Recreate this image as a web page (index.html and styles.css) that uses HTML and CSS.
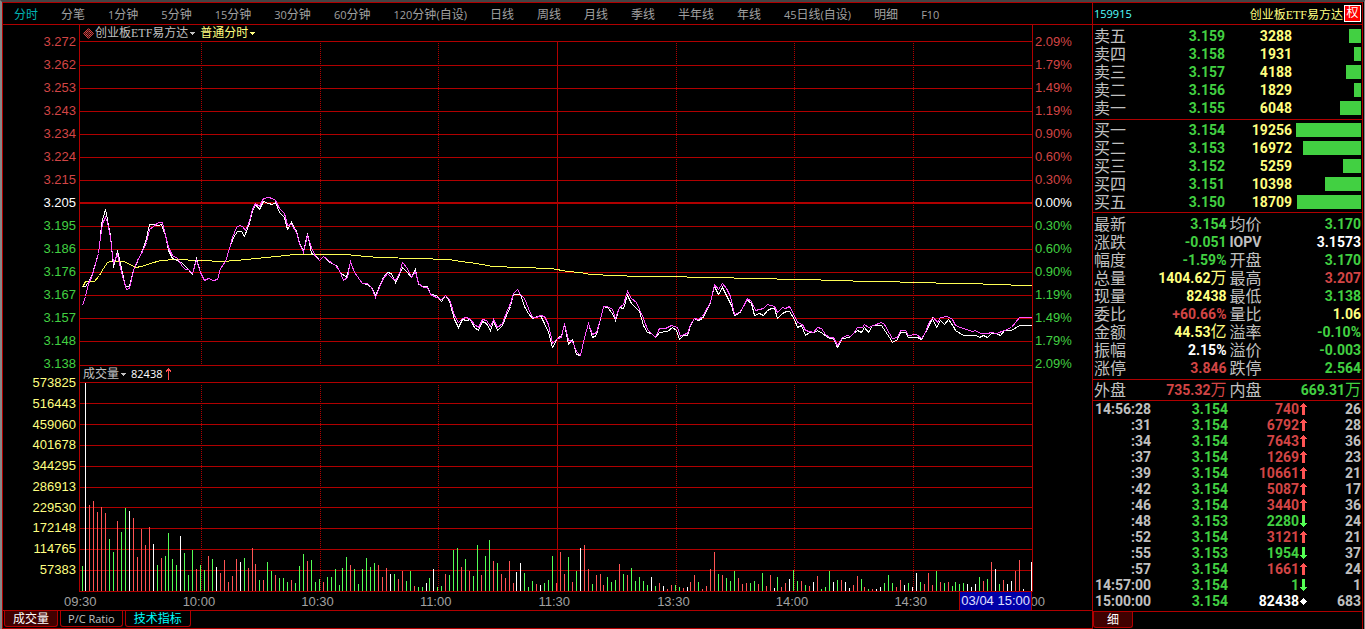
FILE: index.html
```html
<!DOCTYPE html>
<html lang="zh-CN">
<head>
    <meta charset="UTF-8">
    <meta name="viewport" content="width=device-width, initial-scale=1.0">
    <title>创业板ETF易方达 159915</title>
    <link rel="stylesheet" href="styles.css">
</head>
<body>
    <!-- shared symbols -->
    <svg class="defs" width="0" height="0">
        <symbol id="up" viewBox="0 0 7 12"><path d="M3 0h1v1h1v1h1v1h1v1H5v8H2V4H0V3h1V2h1V1h1z"/></symbol>
        <symbol id="down" viewBox="0 0 7 12"><path d="M2 0h3v8h2v1H6v1H5v1H4v1H3v-1H2v-1H1V9H0V8h2z"/></symbol>
        <symbol id="same" viewBox="0 0 7 12"><path d="M3 3h1v1h1v1h1v1h1v1H6v1H5v1H4v1H3V9H2V8H1V7H0V6h1V5h1V4h1z"/></symbol>
        <symbol id="caret" viewBox="0 0 5 3"><path d="M0 0h5v1H4v1H3v1H2V2H1V1H0z"/></symbol>
    </svg>

    <div class="frame">
        <main class="chart">
            <nav class="periods">
                <a href="#" class="active">分时</a>
                <a href="#">分笔</a>
                <a href="#"><span class="num">1</span>分钟</a>
                <a href="#"><span class="num">5</span>分钟</a>
                <a href="#"><span class="num">15</span>分钟</a>
                <a href="#"><span class="num">30</span>分钟</a>
                <a href="#"><span class="num">60</span>分钟</a>
                <a href="#"><span class="num">120</span>分钟<span class="num">(</span>自设<span class="num">)</span></a>
                <a href="#">日线</a>
                <a href="#">周线</a>
                <a href="#">月线</a>
                <a href="#">季线</a>
                <a href="#">半年线</a>
                <a href="#">年线</a>
                <a href="#"><span class="num">45</span>日线<span class="num">(</span>自设<span class="num">)</span></a>
                <a href="#">明细</a>
                <a href="#"><span class="num">F10</span></a>
            </nav>

            <div class="charts">
                <div class="axis axis-left">
                    <ul class="scale">
                        <li class="red">3.272</li>
                        <li class="red">3.262</li>
                        <li class="red">3.253</li>
                        <li class="red">3.243</li>
                        <li class="red">3.234</li>
                        <li class="red">3.224</li>
                        <li class="red">3.215</li>
                        <li class="white">3.205</li>
                        <li class="green">3.195</li>
                        <li class="green">3.186</li>
                        <li class="green">3.176</li>
                        <li class="green">3.167</li>
                        <li class="green">3.157</li>
                        <li class="green">3.148</li>
                        <li class="green">3.138</li>
                    </ul>
                    <ul class="volume-scale yellow">
                        <li>573825</li>
                        <li>516443</li>
                        <li>459060</li>
                        <li>401678</li>
                        <li>344295</li>
                        <li>286913</li>
                        <li>229530</li>
                        <li>172148</li>
                        <li>114765</li>
                        <li>57383</li>
                    </ul>
                </div>

                <div class="plots">
                    <div class="plot-title">
                        <svg class="gem" viewBox="0 0 11 11"><path d="M5.5.7l4.8 4.8-4.8 4.8L.7 5.5zM5.5 2.6L8.4 5.5 5.5 8.4 2.6 5.5zM5.5 4.6l.9.9-.9.9-.9-.9z"/></svg>
                        <button type="button" class="song">创业板ETF易方达<svg class="caret"><use href="#caret"/></svg></button>
                        <button type="button" class="mode">普通分时<svg class="caret"><use href="#caret"/></svg></button>
                    </div>

                    <svg class="price-plot" viewBox="79.5 40.5 952 325" preserveAspectRatio="none">
                        <path class="grid" d="M79 41H1032M79 65H1032M79 88H1032M79 111H1032M79 134H1032M79 157H1032M79 180H1032M79 226H1032M79 249H1032M79 272H1032M79 295H1032M79 318H1032M79 341H1032M79 365H1032M557 41V363"/>
                        <path class="grid base" d="M79 202.5H1032"/>
                        <path class="grid dots" d="M201 42.5V363.5M320 42.5V363.5M438 42.5V363.5M676 42.5V363.5M794 42.5V363.5M913 42.5V363.5"/>
                        <polyline class="average" points="82,287 85,281 94,281 99,275 103,268 107,262 110,261 123,261 130,264 135,267 141,266 150,263 160,260 175,259 200,260 222,261 236,260 255,258 276,256 294,254 345,254 366,256 378,257 417,258 448,259 460,261 476,263 492,266 520,267 551,268 567,271 580,272 590,274 615,275 638,276 686,276 687,277 733,277 734,278 776,278 777,279 820,279 821,280 852,280 853,281 899,281 900,282 935,282 936,283 982,283 983,284 1010,284 1011,285 1031,285"/>
                        <polyline class="price" points="82,286 85,286 89,280 92,273 94,266 98,253 100,237 101,223 105,209 110,235 113,267 117,250 121,268 125,286 129,286 133,270 137,261 142,250 146,238 149,224 154,224 158,225 161,224 165,235 168,250 172,258 177,260 182,263 187,268 192,274 196,258 200,272 204,280 208,278 213,280 217,279 220,268 225,261 229,248 233,237 237,231 241,231 244,236 249,223 252,210 255,204 259,209 263,201 268,203 272,204 275,202 279,212 284,217 287,229 291,222 296,231 299,243 303,251 307,233 311,253 315,255 319,260 323,256 328,261 333,264 336,265 340,272 346,277 350,262 354,272 362,283 367,284 371,287 375,295 379,286 383,277 387,272 391,273 395,282 399,274 402,267 407,272 411,277 415,269 418,284 423,286 427,286 430,294 436,295 441,301 445,295 449,301 454,319 458,327 462,319 466,320 470,319 474,327 478,330 482,321 486,323 490,330 493,321 497,330 502,325 506,315 510,306 513,294 520,294 524,306 528,313 532,318 540,315 544,323 548,332 552,347 557,338 561,335 564,324 568,344 572,339 576,354 580,355 584,337 588,323 592,337 596,335 600,319 603,306 607,307 612,313 615,320 619,307 623,308 627,295 631,303 639,311 643,325 647,332 651,333 655,337 659,332 667,331 672,327 676,330 679,339 683,335 687,335 690,325 694,318 698,320 702,318 706,311 710,302 714,286 718,294 722,287 726,295 731,305 734,315 739,313 743,306 746,299 751,303 754,315 759,313 763,315 767,310 771,308 774,308 777,318 782,313 786,311 789,311 794,319 797,327 801,325 805,335 809,332 814,332 817,330 822,333 829,338 833,338 837,347 842,338 849,337 853,333 857,330 861,332 864,327 868,332 872,325 881,325 885,331 889,337 892,342 897,339 900,332 905,332 908,337 917,337 921,339 925,332 929,324 932,318 936,327 940,320 944,324 948,319 953,326 955,330 963,335 976,335 979,337 983,335 987,337 991,333 996,333 1000,335 1004,330 1011,330 1019,325 1031,325"/>
                        <polyline class="iopv" points="82,305 85,296 88,283 91,277 94,267 98,253 100,237 102,223 105,217 107,222 110,237 113,263 115,258 117,254 121,272 126,289 129,288 133,270 137,260 142,251 146,242 149,229 153,226 158,222 162,222 165,235 168,247 172,255 177,258 182,266 185,269 188,269 192,273 196,260 200,272 204,280 208,278 213,280 217,279 220,268 225,261 229,248 232,237 236,227 239,225 242,226 245,230 249,221 252,209 255,203 259,206 263,198 268,197 272,198 275,200 279,208 284,213 287,225 291,224 296,232 299,243 303,252 307,235 311,247 315,256 319,260 323,256 332,263 335,265 339,270 343,280 347,277 350,261 354,272 362,283 367,283 371,287 375,297 379,287 383,278 387,273 391,277 395,280 399,273 402,262 407,268 411,277 415,271 418,283 423,287 427,287 430,294 436,297 441,299 445,295 449,299 454,315 458,322 462,318 466,317 470,319 474,324 478,327 482,319 486,320 490,326 493,319 497,327 502,323 506,312 510,303 513,293 517,289 520,294 524,298 528,308 532,317 536,317 540,315 544,316 548,324 552,343 557,338 561,337 564,323 568,340 572,341 576,351 580,355 584,337 588,323 592,334 596,332 600,319 603,306 607,306 612,309 615,318 619,307 623,304 627,291 631,298 636,302 639,309 643,318 647,329 651,333 655,337 659,328 665,328 671,325 674,326 677,327 680,336 683,334 687,333 690,324 694,318 698,319 702,316 706,309 710,302 714,284 718,289 722,283 726,288 730,296 734,314 739,312 743,306 747,298 751,301 755,310 763,308 767,304 774,306 777,312 782,307 785,308 789,306 794,315 797,322 802,324 805,330 813,332 817,327 821,328 825,334 829,337 833,337 837,345 842,337 847,335 850,336 853,333 857,327 862,327 864,324 868,327 873,325 881,322 884,324 889,333 892,338 897,337 900,330 905,330 908,335 916,334 921,338 925,332 929,321 933,317 937,322 940,317 947,316 952,319 955,325 960,327 972,331 975,330 980,333 987,333 991,332 996,333 1004,330 1011,327 1019,317 1031,317"/>
                    </svg>

                    <div class="plot-title">
                        <button type="button">成交量<svg class="caret"><use href="#caret"/></svg></button>
                        <span class="volume-now">82438</span>
                        <svg class="rise" viewBox="0 0 5 12"><path d="M2 0h1v1h1v1h1v2H4V3H3v9H2V3H1v1H0V2h1V1h1z"/></svg>
                    </div>

                    <svg class="volume-plot" viewBox="79.5 381.5 952 210" preserveAspectRatio="none">
                        <path class="grid" d="M79 382H1032M79 403H1032M79 424H1032M79 445H1032M79 466H1032M79 487H1032M79 507H1032M79 528H1032M79 549H1032M79 570H1032M79 591H1032M557 382V591"/>
                        <path class="grid dots" d="M201 384V591M320 384V591M438 384V591M676 384V591M794 384V591M913 384V591"/>
                        <g transform="translate(0 -.5)">
                            <path class="bar-up" d="M89 591V505M93 591V501M97 591V512M101 591V507M105 591V513M117 591V521M133 591V518M137 591V557M141 591V529M145 591V545M149 591V527M161 591V558M196 591V569M208 591V556M220 591V573M224 591V560M228 591V582M232 591V576M236 591V559M248 591V568M252 591V548M255 591V564M263 591V580M275 591V575M291 591V580M307 591V561M323 591V582M350 591V565M378 591V565M382 591V577M386 591V568M398 591V579M402 591V571M414 591V586M445 591V574M461 591V567M469 591V571M481 591V575M493 591V561M501 591V574M505 591V578M509 591V561M513 591V583M536 591V584M556 591V583M560 591V552M564 591V574M572 591V582M584 591V545M588 591V569M596 591V575M600 591V574M603 591V585M619 591V564M627 591V575M659 591V583M667 591V589M671 591V585M683 591V588M690 591V582M694 591V575M702 591V589M706 591V586M710 591V569M714 591V552M722 591V575M738 591V578M742 591V584M746 591V583M758 591V584M766 591V586M770 591V575M781 591V587M785 591V583M801 591V581M809 591V586M817 591V576M841 591V580M853 591V585M857 591V576M864 591V587M872 591V589M896 591V587M900 591V580M924 591V584M928 591V573M932 591V585M940 591V582M948 591V582M983 591V581M991 591V562M1003 591V580M1015 591V571M1019 591V560"/>
                            <path class="bar-down" d="M82 591V566M109 591V539M113 591V552M121 591V532M125 591V508M157 591V565M165 591V556M168 591V533M172 591V559M176 591V565M184 591V553M188 591V575M192 591V550M200 591V565M204 591V570M212 591V559M244 591V558M259 591V580M267 591V562M271 591V571M279 591V578M283 591V578M287 591V582M295 591V583M299 591V566M303 591V554M311 591V560M315 591V582M319 591V579M327 591V577M331 591V577M335 591V569M339 591V585M342 591V568M346 591V557M354 591V569M358 591V584M362 591V569M366 591V558M370 591V567M374 591V563M394 591V574M406 591V581M410 591V571M418 591V587M422 591V587M429 591V578M437 591V587M441 591V586M449 591V575M453 591V550M457 591V548M465 591V559M473 591V576M477 591V545M485 591V556M489 591V540M497 591V563M524 591V573M528 591V587M532 591V581M544 591V583M548 591V580M552 591V556M568 591V557M576 591V571M592 591V584M607 591V577M611 591V582M615 591V580M623 591V574M631 591V568M635 591V581M639 591V577M643 591V581M647 591V585M655 591V586M675 591V585M679 591V587M698 591V582M718 591V574M726 591V578M730 591V581M734 591V571M750 591V583M754 591V581M762 591V573M777 591V577M793 591V570M797 591V581M805 591V585M821 591V589M825 591V587M829 591V571M837 591V580M861 591V579M868 591V589M884 591V583M888 591V575M892 591V583M908 591V583M920 591V582M936 591V571M944 591V583M952 591V586M955 591V582M959 591V584M963 591V583M979 591V577M987 591V579M999 591V584"/>
                            <path class="bar-flat" d="M85 591V383M129 591V511M153 591V544M180 591V536M216 591V567M240 591V562M390 591V574M426 591V583M433 591V569M516 591V572M520 591V563M540 591V585M580 591V548M651 591V577M663 591V586M687 591V587M774 591V588M789 591V579M813 591V582M833 591V582M845 591V582M849 591V588M876 591V589M880 591V587M904 591V585M912 591V587M916 591V573M967 591V584M971 591V587M975 591V584M995 591V569M1007 591V584M1011 591V581M1023 591V589M1031 591V562"/>
                        </g>
                    </svg>
                </div>

                <div class="axis axis-right">
                    <ul class="scale">
                        <li class="red">2.09%</li>
                        <li class="red">1.79%</li>
                        <li class="red">1.49%</li>
                        <li class="red">1.19%</li>
                        <li class="red">0.90%</li>
                        <li class="red">0.60%</li>
                        <li class="red">0.30%</li>
                        <li class="white">0.00%</li>
                        <li class="green">0.30%</li>
                        <li class="green">0.60%</li>
                        <li class="green">0.90%</li>
                        <li class="green">1.19%</li>
                        <li class="green">1.49%</li>
                        <li class="green">1.79%</li>
                        <li class="green">2.09%</li>
                    </ul>
                </div>
            </div>

            <div class="times">
                <span>09:30</span>
                <span>10:00</span>
                <span>10:30</span>
                <span>11:00</span>
                <span>11:30</span>
                <span>13:30</span>
                <span>14:00</span>
                <span>14:30</span>
                <span class="last">00</span>
                <div class="cursor-time">03/04 15:00</div>
            </div>

            <div class="tabs">
                <button type="button" class="tab selected">成交量</button>
                <button type="button" class="tab latin">P/C Ratio</button>
                <button type="button" class="tab cyan">技术指标</button>
            </div>
        </main>

        <aside class="quote">
            <header class="quote-head">
                <span class="code">159915</span>
                <span class="name song">创业板ETF易方达</span>
                <span class="badge">权</span>
            </header>

            <table class="book asks">
                <tr><th>卖五</th><td class="green">3.159</td><td class="yellow">3288</td><td><div class="depth" style="width: 12px"></div></td></tr>
                <tr><th>卖四</th><td class="green">3.158</td><td class="yellow">1931</td><td><div class="depth" style="width: 7px"></div></td></tr>
                <tr><th>卖三</th><td class="green">3.157</td><td class="yellow">4188</td><td><div class="depth" style="width: 15px"></div></td></tr>
                <tr><th>卖二</th><td class="green">3.156</td><td class="yellow">1829</td><td><div class="depth" style="width: 7px"></div></td></tr>
                <tr><th>卖一</th><td class="green">3.155</td><td class="yellow">6048</td><td><div class="depth" style="width: 21px"></div></td></tr>
            </table>

            <table class="book bids">
                <tr><th>买一</th><td class="green">3.154</td><td class="yellow">19256</td><td><div class="depth" style="width: 65px"></div></td></tr>
                <tr><th>买二</th><td class="green">3.153</td><td class="yellow">16972</td><td><div class="depth" style="width: 58px"></div></td></tr>
                <tr><th>买三</th><td class="green">3.152</td><td class="yellow">5259</td><td><div class="depth" style="width: 18px"></div></td></tr>
                <tr><th>买四</th><td class="green">3.151</td><td class="yellow">10398</td><td><div class="depth" style="width: 36px"></div></td></tr>
                <tr><th>买五</th><td class="green">3.150</td><td class="yellow">18709</td><td><div class="depth" style="width: 64px"></div></td></tr>
            </table>

            <table class="stats">
                <tr><th>最新</th><td class="green">3.154</td><th>均价</th><td class="green">3.170</td></tr>
                <tr><th>涨跌</th><td class="green">-0.051</td><th class="iopv-label">IOPV</th><td class="white">3.1573</td></tr>
                <tr><th>幅度</th><td class="green">-1.59%</td><th>开盘</th><td class="green">3.170</td></tr>
                <tr><th>总量</th><td class="yellow">1404.62<span class="unit">万</span></td><th>最高</th><td class="red">3.207</td></tr>
                <tr><th>现量</th><td class="yellow">82438</td><th>最低</th><td class="green">3.138</td></tr>
                <tr><th>委比</th><td class="red">+60.66%</td><th>量比</th><td class="yellow">1.06</td></tr>
                <tr><th>金额</th><td class="yellow">44.53<span class="unit">亿</span></td><th>溢率</th><td class="green">-0.10%</td></tr>
                <tr><th>振幅</th><td class="white">2.15%</td><th>溢价</th><td class="green">-0.003</td></tr>
                <tr><th>涨停</th><td class="red">3.846</td><th>跌停</th><td class="green">2.564</td></tr>
            </table>

            <table class="stats flow">
                <tr><th>外盘</th><td class="red">735.32<span class="unit">万</span></td><th>内盘</th><td class="green">669.31<span class="unit">万</span></td></tr>
            </table>

            <table class="ticks">
                <tr><td>14:56:28</td><td class="green">3.154</td><td class="red">740<svg class="dir up"><use href="#up"/></svg></td><td>26</td></tr>
                <tr><td>:31</td><td class="green">3.154</td><td class="red">6792<svg class="dir up"><use href="#up"/></svg></td><td>28</td></tr>
                <tr><td>:34</td><td class="green">3.154</td><td class="red">7643<svg class="dir up"><use href="#up"/></svg></td><td>36</td></tr>
                <tr><td>:37</td><td class="green">3.154</td><td class="red">1269<svg class="dir up"><use href="#up"/></svg></td><td>23</td></tr>
                <tr><td>:39</td><td class="green">3.154</td><td class="red">10661<svg class="dir up"><use href="#up"/></svg></td><td>21</td></tr>
                <tr><td>:42</td><td class="green">3.154</td><td class="red">5087<svg class="dir up"><use href="#up"/></svg></td><td>17</td></tr>
                <tr><td>:46</td><td class="green">3.154</td><td class="red">3440<svg class="dir up"><use href="#up"/></svg></td><td>36</td></tr>
                <tr><td>:48</td><td class="green">3.153</td><td class="green">2280<svg class="dir down"><use href="#down"/></svg></td><td>24</td></tr>
                <tr><td>:52</td><td class="green">3.154</td><td class="red">3121<svg class="dir up"><use href="#up"/></svg></td><td>21</td></tr>
                <tr><td>:55</td><td class="green">3.153</td><td class="green">1954<svg class="dir down"><use href="#down"/></svg></td><td>37</td></tr>
                <tr><td>:57</td><td class="green">3.154</td><td class="red">1661<svg class="dir up"><use href="#up"/></svg></td><td>24</td></tr>
                <tr><td>14:57:00</td><td class="green">3.154</td><td class="green">1<svg class="dir down"><use href="#down"/></svg></td><td>1</td></tr>
                <tr><td>15:00:00</td><td class="green">3.154</td><td class="white">82438<svg class="dir"><use href="#same"/></svg></td><td>683</td></tr>
            </table>

            <div class="tabs quote-tabs">
                <button type="button" class="tab selected">细</button>
            </div>
        </aside>
    </div>
</body>
</html>
```
FILE: styles.css
```css
* {
    box-sizing: border-box;
}

body {
    margin: 0;
    background-color: #000;
    color: #c0c0c0;
    font-family: "Liberation Sans", "Noto Sans CJK SC", sans-serif;
    font-size: 12px;
}

ul {
    list-style: none;
    margin: 0;
    padding: 0;
}

button {
    background: none;
    border: none;
    padding: 0;
    color: inherit;
    font: inherit;
    cursor: pointer;
}

.defs {
    position: absolute;
}

.red { color: #d24545; }
.green { color: #42d042; }
.yellow { color: #ffff80; }
.white { color: #fff; }
.cyan { color: #00ffff; }

.song {
    font-family: "Liberation Serif", "Noto Sans CJK SC", serif;
}

.frame {
    display: flex;
    border-top: 2px solid #444;
    border-left: 2px solid #888;
    border-right: 1px solid #888;
    padding-right: 1px;
}

/* left side: menu, charts, time axis, tabs */
.chart {
    flex: 1;
    min-width: 0;
    border: 1px solid #b00000;
    border-right: none;
}

.periods {
    display: flex;
    gap: 23px;
    height: 22px;
    padding-left: 11px;
    border-bottom: 1px solid #b00000;
    line-height: 24px;
    white-space: nowrap;
    overflow: hidden;
}

.periods a {
    color: #a0a0a0;
    text-decoration: none;
}

.periods .active {
    color: #00b4b4;
}

.num {
    font-family: "Open Sans", sans-serif;
    font-size: 11px;
}

.charts {
    display: flex;
}

.axis {
    padding-top: 5px;
    font-size: 13px;
}

.axis-left {
    width: 76px;
    padding-right: 3px;
    text-align: right;
}

.axis-right {
    width: 59px;
    padding-left: 2px;
}

.scale li {
    line-height: 23px;
}

.volume-scale {
    display: flex;
    flex-direction: column;
    justify-content: space-between;
    height: 202px;
    line-height: 15px;
}

.plots {
    flex: 1;
    min-width: 0;
    border-left: 1px solid #b00000;
    border-right: 1px solid #b00000;
}

.plot-title {
    display: flex;
    align-items: center;
    height: 16px;
    padding-left: 3px;
    line-height: 16px;
}

.plot-title button {
    display: flex;
    align-items: center;
    margin-right: 5px;
    white-space: nowrap;
}

.plot-title .mode {
    color: #ffff80;
}

.gem {
    width: 11px;
    height: 11px;
    margin-right: 1px;
    fill: none;
    stroke: #ff5050;
}

.caret {
    width: 5px;
    height: 3px;
    margin-left: 2px;
    fill: currentColor;
}

.volume-now {
    color: #fff;
    font-family: "Open Sans", sans-serif;
    font-size: 11px;
}

.rise {
    width: 5px;
    height: 12px;
    margin-left: 4px;
    fill: #ff5050;
}

.price-plot,
.volume-plot {
    display: block;
    width: 100%;
    fill: none;
    shape-rendering: crispEdges;
}

.price-plot { height: 325px; }
.volume-plot { height: 210px; }

.grid { stroke: #b00000; }
.grid.base { stroke-width: 2; }
.grid.dots { stroke-dasharray: 1 1; }

.average { stroke: #ffff54; }
.price { stroke: #fff; }
.iopv { stroke: #ff54ff; }

.bar-up { stroke: #ff5454; }
.bar-down { stroke: #54ff54; }
.bar-flat { stroke: #fff; }

.times {
    position: relative;
    display: flex;
    height: 18px;
    padding: 0 47px 0 61px;
    color: #a0a0a0;
    font-size: 13px;
    line-height: 19px;
}

.times span {
    flex: 1 1 0;
}

.times .last {
    flex: none;
    width: 32px;
    text-align: right;
}

/* marks the selected minute on the time axis */
.cursor-time {
    position: absolute;
    top: 0;
    right: 60px;
    padding: 0 1px;
    border: solid #b00000;
    border-width: 0 1px;
    background-color: #0000a8;
    color: #e0e0ff;
    line-height: 18px;
}

.tabs {
    display: flex;
    gap: 2px;
    height: 18px;
    padding: 0 1px;
    border-top: 1px solid #b00000;
}

.tab {
    height: 16px;
    padding: 0 8px;
    border: 1px solid #b00000;
    border-top: none;
    border-radius: 0 0 3px 3px;
    line-height: 16px;
}

.tab.selected {
    background-color: #400000;
    color: #fff;
}

.tab.latin {
    padding: 0 7px;
    font-family: "Open Sans", sans-serif;
    font-size: 11px;
}

/* right side: quote panel */
.quote {
    flex: none;
    width: 271px;
    border: 1px solid #b00000;
    border-bottom: none;
}

.quote-head {
    display: flex;
    align-items: center;
    height: 22px;
    padding: 0 1px;
    border-bottom: 1px solid #b00000;
}

.code {
    flex: 1;
    color: #54ffff;
    font-family: "Open Sans", sans-serif;
    font-size: 11px;
}

.name {
    color: #ffff80;
}

.badge {
    width: 17px;
    height: 17px;
    margin-left: 1px;
    border: 1px solid #fff;
    background-color: #f00;
    color: #fff;
    line-height: 14px;
    text-align: center;
}

table {
    display: block;
    border-bottom: 1px solid #b00000;
}

tbody {
    display: block;
}

tr {
    display: flex;
    height: 18px;
    line-height: 18px;
    white-space: nowrap;
}

th {
    width: 46px;
    padding: 1px 0 0 1px;
    font-size: 16px;
    font-weight: normal;
    text-align: left;
}

td {
    padding: 0;
    font-family: Roboto, "Noto Sans CJK SC", sans-serif;
    font-size: 14px;
    font-weight: bold;
    text-align: right;
}

.asks { padding: 2px 0; }
.bids { padding: 1px 0; }
.stats { padding: 2px 0; }
.stats.flow { padding: 1px 0; }

.book td:nth-child(2) { flex: 1; }
.book td:nth-child(3) { width: 67px; }

.book td:nth-child(4) {
    width: 70px;
    padding: 2px 1px 2px 0;
}

.depth {
    height: 14px;
    margin-left: auto;
    background-color: #42d042;
}

.stats td {
    flex: 1;
    padding-right: 1px;
}

.stats th:nth-child(3) {
    padding-left: 2px;
}

.stats .iopv-label {
    padding-top: 0;
    font-family: Roboto, sans-serif;
    font-size: 14px;
    font-weight: bold;
}

.unit {
    font-size: 16px;
    font-weight: normal;
    line-height: 0;
}

.ticks {
    padding-bottom: 2px;
}

.ticks tr {
    height: 16px;
    line-height: 16px;
}

.ticks td:nth-child(1) { width: 58px; }
.ticks td:nth-child(2) { width: 77px; }
.ticks td:nth-child(3) { width: 80px; }

.ticks td:nth-child(4) {
    flex: 1;
    padding-right: 1px;
}

.dir {
    width: 7px;
    height: 12px;
    margin: 0 1px;
    fill: #fff;
    vertical-align: -1px;
}

.dir.up { fill: #ff5454; }
.dir.down { fill: #54ff54; }

.quote-tabs {
    height: 17px;
    padding: 0;
    border-top: none;
}

.quote-tabs .tab {
    padding: 0 13px;
}
```
